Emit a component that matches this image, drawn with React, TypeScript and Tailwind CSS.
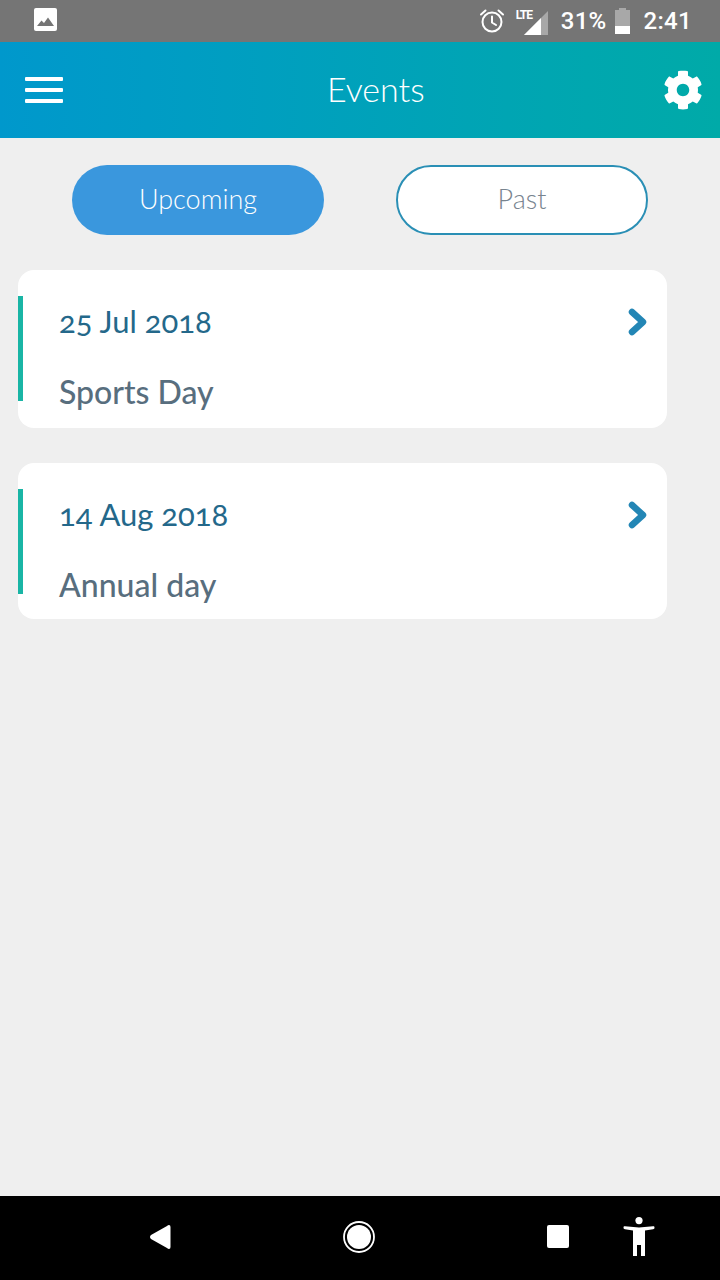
import { FaCog } from 'react-icons/fa';

const EVENTS = [
  { date: '25 Jul 2018', title: 'Sports Day', height: 'h-[158px]' },
  { date: '14 Aug 2018', title: 'Annual day', height: 'h-[156px]' },
];

function StatusBar() {
  return (
    <div className="h-[42px] shrink-0 bg-[#757575] flex items-center pl-[34px] pr-[28px] text-white font-['Roboto',sans-serif]">
      {/* Image notification */}
      <svg width="23" height="23" viewBox="0 0 23 23" className="mb-[3px]">
        <rect width="23" height="23" rx="2" fill="#fff" />
        <path d="M3 18 L7.5 12.5 L10 15 L14 9.5 L20 18 Z" fill="#757575" />
      </svg>
      <div className="ml-auto flex items-center">
        {/* Alarm */}
        <svg width="26" height="26" viewBox="0 0 26 26" fill="none" stroke="#fff" strokeWidth="2" className="mb-[1px]">
          <circle cx="13" cy="14" r="9.5" />
          <path d="M13 8.5V14.5L17 17M2 6.5L6.5 2.5M24 6.5L19.5 2.5" strokeLinecap="round" />
        </svg>
        {/* Signal */}
        <div className="relative w-[32px] h-[28px] ml-[11px]">
          <svg width="24" height="24" viewBox="0 0 24 24" className="absolute right-0 top-[4px]">
            <path d="M0 24 L24 0 V24 Z" fill="#a8a8a8" />
            <path d="M0 24 L17 7 V24 Z" fill="#fff" />
          </svg>
          <span className="absolute left-0 top-[1px] text-[12px] leading-[14px] font-bold tracking-[-1px]">LTE</span>
        </div>
        <span className="ml-[13px] text-[24px] leading-none font-medium tracking-[0.3px]">31%</span>
        {/* Battery */}
        <div className="ml-[8px] w-[15px] h-[26px] relative">
          <div className="absolute left-[4px] top-0 w-[7px] h-[3px] bg-[#a8a8a8]" />
          <div className="absolute left-0 top-[2px] w-[15px] h-[24px] bg-[#a8a8a8]" />
          <div className="absolute left-0 bottom-0 w-[15px] h-[8px] bg-white" />
        </div>
        <span className="ml-[14px] text-[24px] leading-none font-medium tracking-[0.3px]">2:41</span>
      </div>
    </div>
  );
}

function Header() {
  return (
    <div className="h-[96px] shrink-0 bg-gradient-to-r from-[#0098cc] to-[#00aaa8] flex items-center pl-[25px] pr-[17px]">
      <div className="flex flex-col gap-[7px] w-[38px]">
        <div className="h-[4px] bg-white rounded-[1px]" />
        <div className="h-[4px] bg-white rounded-[1px]" />
        <div className="h-[4px] bg-white rounded-[1px]" />
      </div>
      <span className="ml-[264px] mb-[2px] text-[34px] leading-[40px] font-light text-white">Events</span>
      <FaCog size={40} color="#fff" className="ml-auto" />
    </div>
  );
}

function EventCard({ date, title, height }: { date: string; title: string; height: string }) {
  return (
    <div className={`${height} bg-white rounded-[16px] flex items-start pt-[26px]`}>
      <div className="w-[5px] h-[105px] bg-[#19b5a5]" />
      <div className="flex-1 pl-[36px] pr-[18px]">
        <div className="flex items-center justify-between h-[54px] -mt-[1px]">
          <span className="text-[31px] leading-[52px] mb-[2px] text-[#24688a] [font-variant-numeric:oldstyle-nums]">{date}</span>
          <svg width="20" height="28" viewBox="0 0 20 28" fill="none" stroke="#2386b5" strokeWidth="6.5" strokeLinecap="round" strokeLinejoin="round" className="mr-[1px]">
            <path d="M4 4 L15 14 L4 24" />
          </svg>
        </div>
        <div className="text-[32px] leading-[40px] mt-[23px] font-medium text-[#586e7e]">{title}</div>
      </div>
    </div>
  );
}

function NavBar() {
  return (
    <div className="h-[84px] shrink-0 bg-black flex items-center pb-[3px]">
      <svg width="22" height="26" viewBox="0 0 22 26" className="ml-[149px]">
        <path d="M20 1 Q21.5 1 21.5 3 V23 Q21.5 25 20 25 Q19 25 18 24 L2 15 Q0 13 2 11 L18 2 Q19 1 20 1 Z" fill="#fff" />
      </svg>
      <svg width="32" height="32" viewBox="0 0 32 32" className="ml-[172px]">
        <circle cx="16" cy="16" r="15" fill="none" stroke="#fff" strokeWidth="1.8" />
        <circle cx="16" cy="16" r="12" fill="#fff" />
      </svg>
      <div className="ml-[172px] w-[22px] h-[23px] bg-white rounded-[2px]" />
      <svg width="32" height="39" viewBox="0 0 32 39" className="ml-[54px]">
        <circle cx="16" cy="3.6" r="3.6" fill="#fff" />
        <path d="M0.5 10.5 C0.5 9.5 1 9 2 9.2 L16 10.5 L30 9.2 C31 9 31.5 9.5 31.5 10.5 C31.5 11.5 31 12 30 12.2 L22 13.5 V39 H18 V28 H14 V39 H10 V13.5 L2 12.2 C1 12 0.5 11.5 0.5 10.5 Z" fill="#fff" />
      </svg>
    </div>
  );
}

export default function App() {
  return (
    <div className="w-[720px] h-[1280px] bg-[#efefef] flex flex-col font-['Lato',sans-serif] overflow-hidden">
      <StatusBar />
      <Header />
      <main className="flex-1 min-h-0">
        {/* Tabs */}
        <div className="flex pl-[72px] gap-[72px] pt-[27px]">
          <button className="w-[252px] h-[70px] pb-[2px] rounded-full bg-[#3a97dd] text-white text-[27px] font-light">Upcoming</button>
          <button className="w-[252px] h-[70px] pb-[2px] rounded-full bg-white border-2 border-[#2a8fb5] text-[#78848f] text-[27px] font-light">Past</button>
        </div>

        {/* Event list */}
        <div className="w-[649px] ml-[18px] mt-[35px] flex flex-col gap-[35px]">
          {EVENTS.map((e) => (
            <EventCard key={e.date} {...e} />
          ))}
        </div>
      </main>
      <NavBar />
    </div>
  );
}
